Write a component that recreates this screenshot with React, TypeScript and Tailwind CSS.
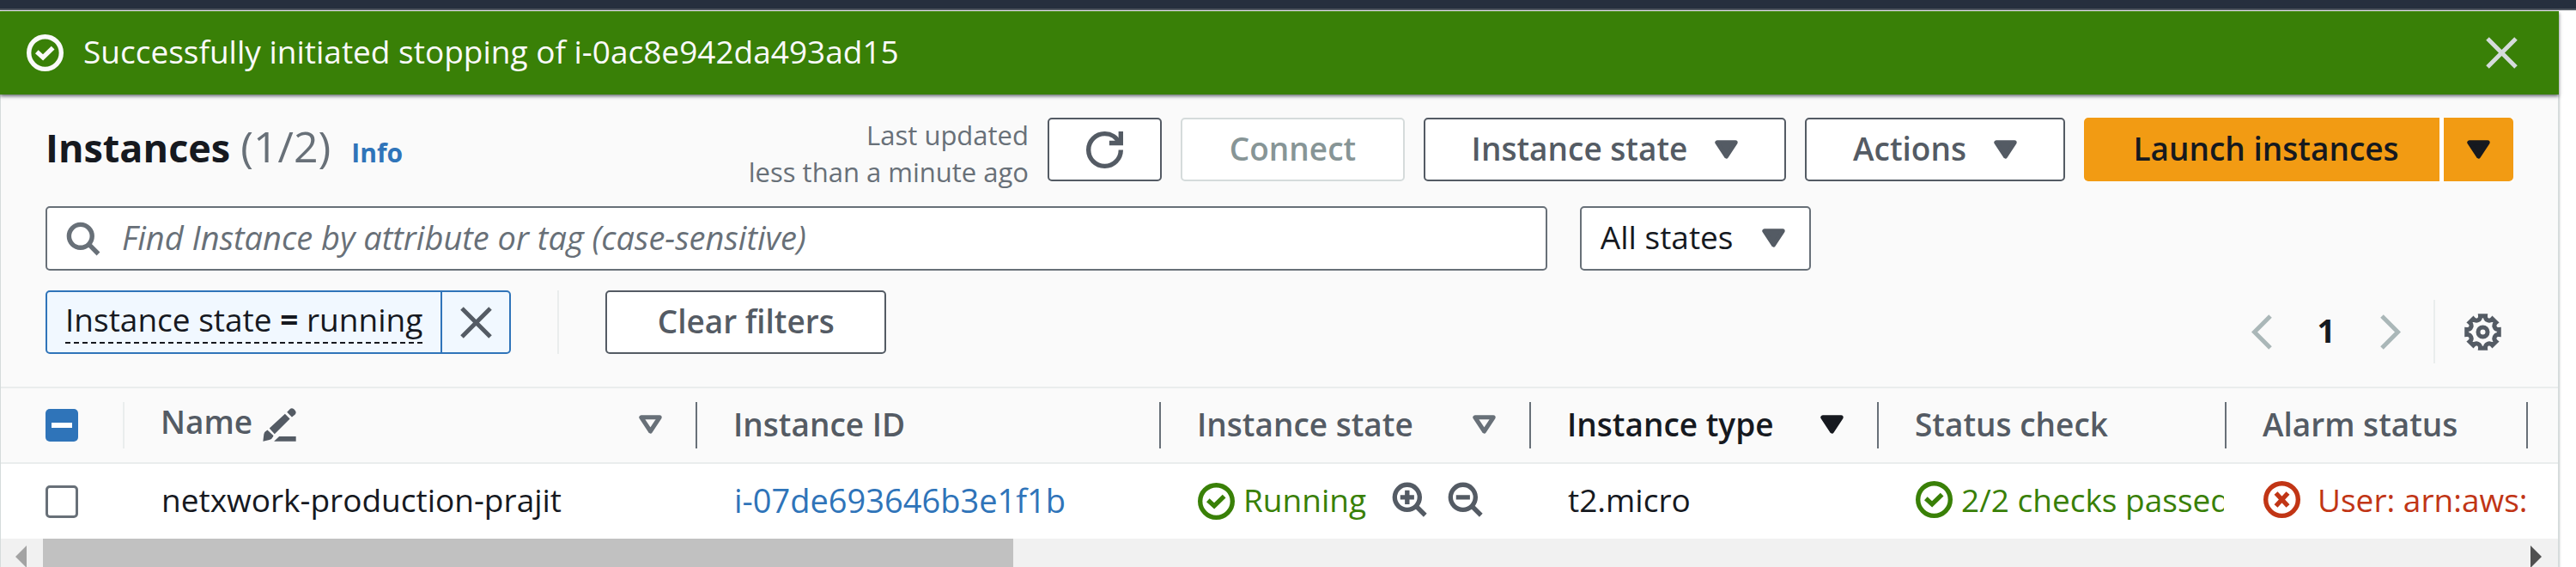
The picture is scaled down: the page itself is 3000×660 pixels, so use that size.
import { useEffect, useRef, type ReactNode } from "react";

const point = (deg: number, r: number) => {
  const a = (deg * Math.PI) / 180;
  return `${(r * Math.sin(a)).toFixed(2)} ${(-r * Math.cos(a)).toFixed(2)}`;
};

const gearPath =
  "M" +
  Array.from({ length: 8 }, (_, i) => {
    const a = i * 45;
    return `${point(a - 9, 19)}L${point(a + 9, 19)}C${point(a + 10, 14)} ${point(a + 35, 14)} ${point(a + 36, 19)}`;
  }).join("L") +
  "Z";

function Icon({ children, className = "" }: { children: ReactNode; className?: string }) {
  return (
    <svg
      viewBox="0 0 16 16"
      fill="none"
      stroke="currentColor"
      strokeWidth="2"
      aria-hidden="true"
      className={`size-[43px] shrink-0 ${className}`}
    >
      {children}
    </svg>
  );
}

const CheckCircle = ({ className = "" }: { className?: string }) => (
  <Icon className={className}>
    <circle cx="8" cy="8" r="7" />
    <path d="m4.4 7.500 2.700 2.500 4.300-4.200" />
  </Icon>
);

const CrossCircle = () => (
  <Icon>
    <circle cx="8" cy="8" r="7" />
    <path d="m5.4 5.2 5.2 5.6M10.6 5.2l-5.2 5.6" />
  </Icon>
);

const Close = () => (
  <svg viewBox="0 0 37 37" fill="none" stroke="currentColor" strokeWidth="5" aria-hidden="true" className="size-[37px] shrink-0">
    <path d="M2 2 35 35M35 2 2 35" />
  </svg>
);

const Caret = ({ hollow = false }: { hollow?: boolean }) => (
  <svg
    viewBox="0 0 27 22"
    fill={hollow ? "none" : "currentColor"}
    stroke="currentColor"
    strokeWidth="5"
    strokeLinejoin="round"
    aria-hidden="true"
    className="h-[22px] w-[27px] shrink-0"
  >
    <path d="M2.8 2.8h21.4L13.5 19Z" />
  </svg>
);

const Chevron = ({ flip = false }: { flip?: boolean }) => (
  <svg viewBox="0 0 24 41" fill="none" stroke="currentColor" strokeWidth="5" aria-hidden="true" className="h-[41px] w-[24px]">
    <path d={flip ? "M2 2l18.500 18.500L2 39" : "M22 2 3.500 20.500 22 39"} />
  </svg>
);

function Button({ children, className = "", disabled, label }: { children: ReactNode; className?: string; disabled?: boolean; label?: string }) {
  return (
    <button
      type="button"
      disabled={disabled}
      aria-label={label}
      className={`flex h-[74px] shrink-0 items-center justify-center rounded-[5px] border-2 bg-white text-[37px] font-semibold whitespace-nowrap ${className}`}
    >
      {children}
    </button>
  );
}

function Header({ children, sort, active }: { children: ReactNode; sort?: "hollow" | "solid"; active?: boolean }) {
  return (
    <th scope="col" className="p-0 text-left font-semibold">
      <div className={`flex h-[54px] items-center justify-between border-r-2 border-[#687078] pr-[39px] pb-[2px] pl-[42px] whitespace-nowrap ${active ? "text-[#16191f]" : "text-[#545b64]"}`}>
        {children}
        {sort && (
          <button type="button" aria-label="Sort" className={active ? "text-[#16191f]" : "text-[#687078]"}>
            <Caret hollow={sort === "hollow"} />
          </button>
        )}
      </div>
    </th>
  );
}

function Cell({ children, className = "" }: { children: ReactNode; className?: string }) {
  return (
    <td className="p-0">
      <div className={`mr-[3px] ml-[43px] flex items-center overflow-hidden pb-[4px] whitespace-nowrap ${className}`}>{children}</div>
    </td>
  );
}

export default function App() {
  const all = useRef<HTMLInputElement>(null);
  useEffect(() => {
    if (all.current) all.current.indeterminate = true;
  }, []);

  return (
    <div className="h-screen overflow-hidden bg-white font-['Open_Sans','Noto_Sans',sans-serif] text-[37px] leading-[50px] text-[#16191f]">
      <div className="h-[12px] border-b-2 border-[#545b64] bg-[#262f3e]" />
      <div className="mt-px mr-[20px]">
        <div role="status" className="relative z-10 flex h-[97px] items-center bg-[#398007] pr-[48px] pl-[31px] text-[#fafafa] shadow-[0_2px_4px_rgba(0,7,22,0.6)]">
          <CheckCircle />
          <p className="grow pb-[4px] pl-[23px]">Successfully initiated stopping of i-0ac8e942da493ad15</p>
          <button type="button" aria-label="Dismiss" className="text-[#d5dbdb]">
            <Close />
          </button>
        </div>

        <main className="border-x border-[#d5dbdb] bg-[#fafafa] shadow-[0_1px_3px_rgba(0,28,36,0.4)]">
          <div className="px-[52px] pt-[25px] pb-[27px]">
            <header className="flex items-start">
              <h1 className="flex items-baseline text-[45px] leading-[70px] font-bold">
                Instances
                <span className="ml-[12px] text-[50px] font-normal text-[#687078]">(1/2)</span>
                <a href="#info" className="ml-[24px] text-[30px] text-[#2f74b9]">
                  Info
                </a>
              </h1>
              <p className="ml-auto pt-px pr-[22px] text-right text-[31px] leading-[43px] text-[#687078]">
                Last updated
                <br />
                less than a minute ago
              </p>
              <div className="flex gap-[22px] pt-[2px]">
                <Button label="Refresh" className="w-[133px] border-[#545b64] text-[#545b64]">
                  <Icon>
                    <path d="M10 5h5V0" />
                    <path d="M15 8a6.957 6.957 0 0 1-7 7 6.957 6.957 0 0 1-7-7 6.957 6.957 0 0 1 7-7 6.870 6.870 0 0 1 6.300 4" />
                  </Icon>
                </Button>
                <Button disabled className="w-[261px] border-[#d5dbdb] pb-[3px] text-[#879596]">
                  Connect
                </Button>
                <Button className="w-[422px] gap-[32px] border-[#545b64] text-[#545b64]">
                  <span className="pb-[3px]">Instance state</span>
                  <Caret />
                </Button>
                <Button className="w-[303px] gap-[32px] border-[#545b64] text-[#545b64]">
                  <span className="pb-[3px]">Actions</span>
                  <Caret />
                </Button>
                <div className="flex gap-[5px] bg-white">
                  <button type="button" className="h-[74px] w-[414px] rounded-l-[5px] bg-[#f29b13] pb-[3px] pl-[10px] font-semibold whitespace-nowrap">
                    Launch instances
                  </button>
                  <button type="button" aria-label="More launch options" className="flex h-[74px] w-[81px] items-center justify-center rounded-r-[5px] bg-[#f29b13]">
                    <Caret />
                  </button>
                </div>
              </div>
            </header>

            <div className="mt-[18px] flex gap-[38px]">
              <label className="flex h-[75px] w-[60.85%] items-center rounded-[5px] border-2 border-[#687078] bg-white pl-[20px] text-[#687078]">
                <Icon>
                  <circle cx="7" cy="7" r="5" />
                  <path d="m10.400 10.400 4.300 4.300" />
                </Icon>
                <input
                  type="text"
                  aria-label="Find Instance"
                  placeholder="Find Instance by attribute or tag (case-sensitive)"
                  className="ml-[24px] h-full grow pb-[4px] text-[38px] outline-none placeholder:text-[#687078] placeholder:italic"
                />
              </label>
              <div className="relative">
                <select aria-label="State filter" className="h-[75px] w-[269px] appearance-none rounded-[5px] border-2 border-[#687078] bg-white pb-[3px] pl-[22px]">
                  <option>All states</option>
                </select>
                <span className="pointer-events-none absolute top-[26px] right-[30px] text-[#545b64]">
                  <Caret />
                </span>
              </div>
            </div>

            <div className="mt-[23px] flex items-start">
              <div className="flex h-[74px] rounded-[5px] border-2 border-[#2f74b9] bg-[#f1f8ff]">
                <div className="flex items-start px-[21px] pt-[7px]">
                  <button type="button" className="border-b-2 border-dashed border-[#16191f] pb-[1px] whitespace-nowrap">
                    Instance state <b>=</b> running
                  </button>
                </div>
                <button type="button" aria-label="Remove filter" className="flex w-[80px] items-center justify-center border-l-2 border-[#2f74b9] text-[#545b64]">
                  <Close />
                </button>
              </div>
              <div className="mx-[54px] h-[74px] border-l-2 border-[#eaeded]" />
              <Button className="w-[327px] border-[#545b64] pb-[3px] text-[#545b64]">Clear filters</Button>
              <nav aria-label="Pages" className="mt-[11px] ml-auto flex h-[74px] items-center pr-[14px] text-[#aab7b8]">
                <button type="button" aria-label="Previous page">
                  <Chevron />
                </button>
                <button type="button" aria-current="page" className="w-[126px] pb-[2px] font-bold text-[#16191f]">
                  1
                </button>
                <button type="button" aria-label="Next page">
                  <Chevron flip />
                </button>
                <span className="mr-[34px] ml-[38px] h-[74px] border-l-2 border-[#eaeded]" />
                <button type="button" aria-label="Preferences" className="text-[#545b64]">
                  <svg viewBox="-21.500 -21.500 43 43" fill="none" stroke="currentColor" strokeWidth="5" aria-hidden="true" className="size-[43px]">
                    <path d={gearPath} />
                    <circle r="5.500" />
                  </svg>
                </button>
              </nav>
            </div>
          </div>

          <table className="w-full table-fixed border-collapse">
            <colgroup>
              <col className="w-[144px]" />
              <col className="w-[667px]" />
              <col className="w-[540px]" />
              <col className="w-[431px]" />
              <col className="w-[405px]" />
              <col className="w-[405px]" />
              <col className="w-[351px]" />
              <col />
            </colgroup>
            <thead>
              <tr className="h-[88px] border-y-2 border-[#eaeded]">
                <th scope="col" className="p-0">
                  <div className="flex h-[54px] items-center border-r-2 border-[#eaeded] pl-[52px]">
                    <input
                      ref={all}
                      type="checkbox"
                      aria-label="Select all instances"
                      className="flex size-[38px] appearance-none items-center justify-center rounded-[5px] bg-[#2f74b9] after:h-[6px] after:w-[24px] after:bg-white after:content-['']"
                    />
                  </div>
                </th>
                <Header sort="hollow">
                  <span className="flex items-center gap-[12px]">
                    <span className="pb-[6px]">Name</span>
                    <svg viewBox="0 0 114 116" fill="currentColor" aria-hidden="true" className="size-[39px]">
                      <path d="M0 115 3 90Q6 81 15 76L36 95Q33 107 22 110ZM22 70 76 20 93 37 40 90ZM83 14 93 4Q99-2 107 4L111 8Q117 15 111 22L100 31ZM38 115 56 98H114V115Z" />
                    </svg>
                  </span>
                </Header>
                <Header>Instance ID</Header>
                <Header sort="hollow">Instance state</Header>
                <Header sort="solid" active>
                  Instance type
                </Header>
                <Header>Status check</Header>
                <Header>Alarm status</Header>
                <td />
              </tr>
            </thead>
            <tbody>
              <tr className="h-[88px] bg-white">
                <td className="p-0">
                  <div className="flex pl-[52px]">
                    <input type="checkbox" aria-label="Select netxwork-production-prajit" className="size-[38px] appearance-none rounded-[5px] border-[3px] border-[#687078] bg-white" />
                  </div>
                </td>
                <Cell>netxwork-production-prajit</Cell>
                <Cell>
                  <a href="#instance" className="text-[38px] text-[#2f74b9]">
                    i-07de693646b3e1f1b
                  </a>
                </Cell>
                <Cell className="text-[#398007]">
                  <CheckCircle className="mt-[4px]" />
                  <span className="ml-[10px]">Running</span>
                  <button type="button" aria-label="Show only running" className="ml-[29px] text-[#545b64]">
                    <Icon>
                      <circle cx="7" cy="7" r="5.400" />
                      <path d="m10.800 10.800 4 4M7 4v6M4 7h6" />
                    </Icon>
                  </button>
                  <button type="button" aria-label="Hide running" className="ml-[22px] text-[#545b64]">
                    <Icon>
                      <circle cx="7" cy="7" r="5.400" />
                      <path d="m10.800 10.800 4 4M4 7h6" />
                    </Icon>
                  </button>
                </Cell>
                <Cell>t2.micro</Cell>
                <Cell className="text-[#398007]">
                  <CheckCircle />
                  <span className="ml-[10px]">2/2 checks passed</span>
                </Cell>
                <Cell className="text-[#c13515]">
                  <CrossCircle />
                  <span className="ml-[20px]">User: arn:aws:iam</span>
                </Cell>
                <td />
              </tr>
            </tbody>
          </table>

          <div className="flex h-[41px] bg-[#f1f1f1]">
            <button type="button" aria-label="Scroll left" className="flex w-[49px] shrink-0 items-center pl-[17px] text-[#a3a3a3]">
              <svg viewBox="0 0 13 26" fill="currentColor" className="h-[26px] w-[13px]">
                <path d="M13 0v26L0 13z" />
              </svg>
            </button>
            <div className="grow">
              <div className="h-full w-[39%] bg-[#c1c1c1]" />
            </div>
            <button type="button" aria-label="Scroll right" className="flex w-[32px] shrink-0 items-center text-[#505050]">
              <svg viewBox="0 0 13 26" fill="currentColor" className="h-[26px] w-[13px]">
                <path d="M0 0v26l13-13z" />
              </svg>
            </button>
          </div>
        </main>
      </div>
    </div>
  );
}
